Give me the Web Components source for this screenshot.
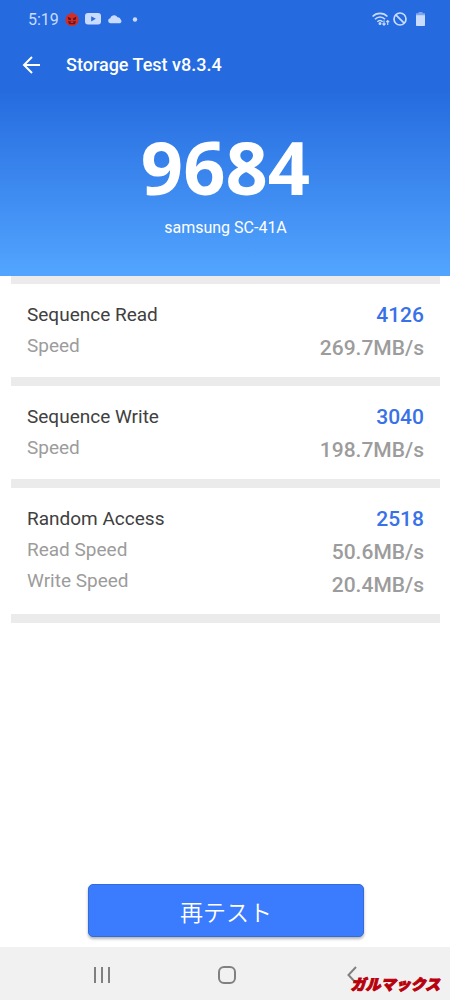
<!DOCTYPE html>
<html lang="ja">
<head>
<meta charset="utf-8">
<meta name="viewport" content="width=device-width, initial-scale=1">
<title>Storage Test</title>
<style>
  body { margin: 0; background: #fff; font-family: Roboto, "Noto Sans CJK JP", sans-serif; }
</style>
</head>
<body>
<storage-app></storage-app>

<script>
const define = (name, html) => customElements.define(name, class extends HTMLElement {
  constructor() {
    super();
    this.attachShadow({ mode: 'open' }).innerHTML = html;
  }
});

define('status-bar', `
  <style>
    :host { display: flex; align-items: center; height: 38px; padding: 0 25px 0 28px; color: #c9dcff; font-size: 16px; }
    svg { display: block; flex: none; }
    .left { display: flex; align-items: center; gap: 6px; flex: 1; }
    .right { display: flex; align-items: center; gap: 3px; }
  </style>
  <div class="left">
    <time>5:19</time>
    <svg width="14" height="16" viewBox="0 0 15 16">
      <path d="M7.5 0 9 2.2C12.6 2.800 14.600 5.600 14.600 9c0 3.800-3 6.500-7.100 6.500S.4 12.800.4 9C.4 5.600 2.400 2.800 6 2.200Z" fill="#cf2f28"/>
      <path d="M3 5.500 6.600 7.500 5.900 9.300 3.400 8.600ZM12 5.500 8.400 7.500 9.100 9.300 11.600 8.600Z" fill="#5a1020"/>
      <path d="M3 10.500h9l-1.500 3.200H4.500Z" fill="#6a1420"/>
      <path d="M6 10.500v1.800h3v-1.800" fill="#cf2f28"/>
    </svg>
    <svg width="16" height="12" viewBox="0 0 16 12">
      <rect width="16" height="11.500" rx="3" fill="#c9dcff"/>
      <path d="M6.200 3.200v5.200L10.800 5.800Z" fill="#256bdf"/>
    </svg>
    <svg width="15" height="10" viewBox="0 0 15 10">
      <path d="M3.300 9.300A2.600 2.600 0 0 1 3.200 4.200 3.900 3.900 0 0 1 10.500 3.300 3 3 0 0 1 13.800 5.800C15 7 14.400 9.300 12.500 9.300Z" fill="#c9dcff"/>
    </svg>
    <svg width="14" height="5" viewBox="0 0 14 5"><circle cx="7" cy="2.500" r="2.200" fill="#c9dcff"/></svg>
  </div>
  <div class="right">
    <svg width="18" height="14" viewBox="0 0 18 14" fill="none" stroke="#c9dcff" stroke-width="1.600">
      <path d="M.6 4.500C4.500.3 11.500.3 15.400 4.500M3 7.200C5.800 4.200 10.200 4.200 13 7.200M5.400 9.700C7 8 9 8 10.600 9.700"/>
      <circle cx="8" cy="11.500" r=".7" fill="#c9dcff"/>
      <path d="M12 8.500v4.500M10.500 11.500l1.500 1.600 1.500-1.600M15.700 13V8.700M14.200 10.200l1.500-1.600 1.500 1.600" stroke-width="1.100"/>
    </svg>
    <svg width="14" height="14" viewBox="0 0 14 14" fill="none" stroke="#c9dcff" stroke-width="1.700">
      <circle cx="7" cy="7" r="6"/><path d="m2.800 2.800 8.400 8.400"/>
    </svg>
    <svg width="15" height="14" viewBox="0 0 15 14">
      <path d="M8.500 0h4v1.200h-4ZM6 1.200h9V4H6Z" fill="#7ea6ee"/>
      <path d="M6 3.200h9v10a.8.8 0 0 1-.8.8H6.800a.8.8 0 0 1-.8-.8Z" fill="#c9dcff"/>
    </svg>
  </div>
`);

define('app-toolbar', `
  <style>
    :host { display: flex; align-items: center; gap: 25px; height: 53px; padding: 0 22px; color: #fff; }
    button { display: block; border: 0; padding: 0; background: none; color: inherit; }
    svg { display: block; }
    h1 { margin: 0; font-size: 18px; font-weight: 500; line-height: 24px; }
  </style>
  <button type="button" aria-label="戻る">
    <svg width="19" height="18" viewBox="0 0 19 18" fill="none" stroke="currentColor" stroke-width="2">
      <path d="M18 9H2M10 1 2 9l8 8"/>
    </svg>
  </button>
  <h1><slot></slot></h1>
`);

define('score-hero', `
  <style>
    :host { display: block; height: 276px; color: #fff; text-align: center;
      background: linear-gradient(#256bdf 0, #256bdf 90px, #52a5ff 276px); }
    .score { margin: 40px 0 0; font: 700 74px/72px "Noto Sans", sans-serif; }
    .device { margin: 15px 0 0; font-size: 16px; line-height: 20px; }
    .score, .device { padding-left: 1px; }
  </style>
  <slot name="top"></slot>
  <p class="score"><slot name="score"></slot></p>
  <p class="device"><slot name="device"></slot></p>
`);

define('result-card', `
  <style>
    :host { display: flex; justify-content: space-between; padding: 15px 16px 12px;
      border-bottom: 9px solid #ebebeb; font-size: 19px; color: #9c9c9c; }
    h2, p { margin: 0; font-size: inherit; font-weight: inherit; }
    .labels { line-height: 31px; font-weight: 400; }
    .values { line-height: 33px; font-size: 21px; font-weight: 500; text-align: right; }
    h2 { color: #404040; }
    .points { color: #3871e8; }
  </style>
  <div class="labels"><h2><slot name="title"></slot></h2><slot name="label"></slot></div>
  <div class="values"><p class="points"><slot name="points"></slot></p><slot name="value"></slot></div>
`);

define('retest-button', `
  <style>
    :host { display: block; flex: 1; }
    button { box-sizing: border-box; display: block; width: 100%; height: 53px; border: 1px solid #326bdc; border-radius: 5px;
      background: #3b7bfd; color: #fff; font: 350 23px/48px "Noto Sans CJK JP", sans-serif;
      box-shadow: 0 2px 3px rgba(0,0,0,.3); padding: 0; }
  </style>
  <button type="button"><slot></slot></button>
`);

define('nav-bar', `
  <style>
    :host { position: relative; display: grid; grid-template-columns: 1fr 1fr 1fr; align-items: center;
      height: 53px; padding: 0 35px 0 39px; background: #f1f1f1; color: #808080; }
    button { display: flex; justify-content: center; border: 0; padding: 2px 0 0; background: none; color: inherit; }
    svg { display: block; }
    .mark { position: absolute; right: 10px; bottom: 5px; color: #b8000c;
      font: italic 900 15px/22px "Noto Sans CJK JP", sans-serif; -webkit-text-stroke: 1px #b8000c; }
  </style>
  <button type="button" aria-label="履歴">
    <svg width="18" height="18" viewBox="0 0 18 18" fill="none" stroke="currentColor" stroke-width="2"><path d="M2 1v16M9 1v16M16 1v16"/></svg>
  </button>
  <button type="button" aria-label="ホーム">
    <svg width="18" height="18" viewBox="0 0 18 18" fill="none" stroke="currentColor" stroke-width="2"><rect x="1" y="1" width="16" height="16" rx="5"/></svg>
  </button>
  <button type="button" aria-label="戻る">
    <svg width="10" height="18" viewBox="0 0 10 18" fill="none" stroke="currentColor" stroke-width="2"><path d="M9 1 1.500 9 9 17"/></svg>
  </button>
  <span class="mark"><slot></slot></span>
`);

define('storage-app', `
  <style>
    :host { display: flex; flex-direction: column; min-height: 100vh; }
    main { flex: 1; display: flex; flex-direction: column; }
    .results { margin: 0 10px 0 11px; border-top: 8px solid #ebebeb; }
    p { margin: 0; }
    .action { display: flex; margin-top: auto; padding: 24px 86px 10px 88px; }
  </style>
  <score-hero>
    <header slot="top"><status-bar></status-bar><app-toolbar>Storage Test v8.3.4</app-toolbar></header>
    <span slot="score">9684</span>
    <span slot="device">samsung SC-41A</span>
  </score-hero>
  <main>
    <section class="results">
      <result-card>
        <span slot="title">Sequence Read</span><span slot="points">4126</span>
        <p slot="label">Speed</p><p slot="value">269.7MB/s</p>
      </result-card>
      <result-card>
        <span slot="title">Sequence Write</span><span slot="points">3040</span>
        <p slot="label">Speed</p><p slot="value">198.7MB/s</p>
      </result-card>
      <result-card>
        <span slot="title">Random Access</span><span slot="points">2518</span>
        <p slot="label">Read Speed</p><p slot="label">Write Speed</p>
        <p slot="value">50.6MB/s</p><p slot="value">20.4MB/s</p>
      </result-card>
    </section>
    <div class="action"><retest-button>再テスト</retest-button></div>
  </main>
  <nav-bar>ガルマックス</nav-bar>
`);
</script>
</body>
</html>
